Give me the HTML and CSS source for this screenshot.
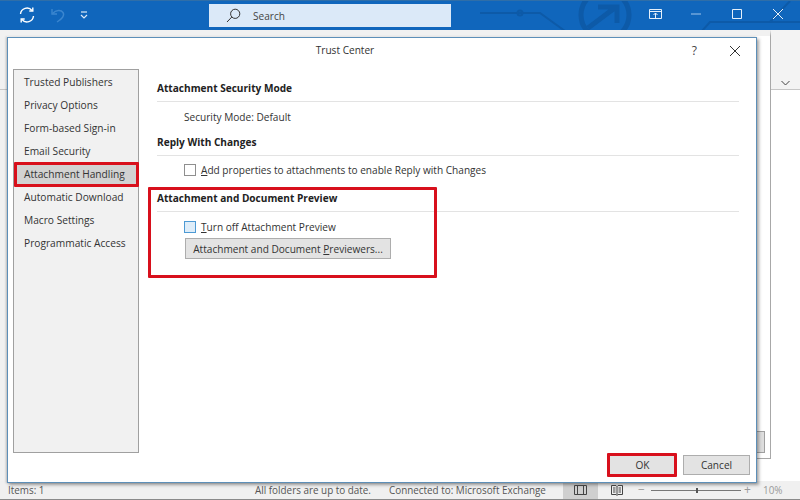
FILE: index.html
```html
<!DOCTYPE html>
<html lang="en">
<head>
<meta charset="utf-8">
<title>Trust Center</title>
<link rel="stylesheet" href="styles.css">
</head>
<body>
<div class="app">
  <header class="ribbon">
    <div class="qat">
      <svg class="ico" width="18" height="18" viewBox="0 0 18 18" fill="none" stroke="#fff" stroke-width="1.4"><path d="M2.500 8A6.500 6.500 0 0 1 14 4.500"/><path d="M15.500 10A6.500 6.500 0 0 1 4 13.500"/><path d="M14.800 1.500V5H11.300"/><path d="M3.200 16.500V13H6.700"/></svg>
      <svg class="ico" width="16" height="16" viewBox="0 0 16 16" fill="none" stroke="#3b86cf" stroke-width="1.400"><path d="M2 2V7H7"/><path d="M2.500 6.500C6 3 11 2.500 13 5.500S12 12 7 15"/></svg>
      <svg class="ico" width="8" height="8" viewBox="0 0 8 8" fill="none" stroke="#dbe9f7" stroke-width="1.200"><path d="M1 1H7"/><path d="M1 4L4 7L7 4"/></svg>
    </div>
    <div class="search">
      <svg width="15" height="15" viewBox="0 0 15 15" fill="none" stroke="#333"><circle cx="9.200" cy="5.800" r="4.600"/><path d="M5.800 9L1 14"/></svg>
      <span>Search</span>
    </div>
    <svg class="circuit" width="330" height="30" viewBox="0 0 330 30" fill="none" stroke="#0d5aa8" stroke-width="2"><path d="M10 12H70L95 30"/><circle cx="50" cy="12" r="2.500"/><circle cx="135" cy="14" r="24" stroke-width="5"/><path d="M118 27L146 6M128 6H147V22" stroke-width="5"/><path d="M232 30L240 21H330"/><path d="M300 21L320 0"/></svg>
    <div class="winctl">
      <svg class="ctl-first" width="13" height="10" viewBox="0 0 13 10" fill="none" stroke="#e6f0fa"><path d="M.5.5H12.500V9.500H.5Z"/><path d="M.5 2.500H12.500"/><path d="M6.500 9V4M4.500 6L6.500 4L8.500 6"/></svg>
      <svg width="10" height="10" viewBox="0 0 10 10" fill="none" stroke="#9fc4ea"><path d="M0 5H10"/></svg>
      <svg width="10" height="10" viewBox="0 0 10 10" fill="none" stroke="#e6f0fa"><path d="M.5.5H9.500V9.500H.5Z"/></svg>
      <svg width="10" height="10" viewBox="0 0 10 10" fill="none" stroke="#e6f0fa"><path d="M0 0L10 10M10 0L0 10"/></svg>
    </div>
  </header>

  <main class="workspace">
    <div class="left-rail"><div class="left-top"></div></div>
    <div class="reading">
      <div class="behind"></div>
    </div>
    <div class="right-rail">
      <div class="rail-top">
        <svg width="9" height="6" viewBox="0 0 9 6" fill="none" stroke="#444"><path d="M.5 1L4.500 5L8.500 1"/></svg>
      </div>
    </div>
  </main>

  <footer class="status">
    <span class="items">Items: 1</span>
    <span class="sync">All folders are up to date.</span>
    <span class="conn">Connected to: Microsoft Exchange</span>
    <div class="view active">
      <svg width="13" height="10" viewBox="0 0 13 10" fill="none" stroke="#444"><path d="M.5.5H12.500V9.500H.5ZM3.500.5V9.500M9.500.5V9.500"/></svg>
    </div>
    <div class="view">
      <svg width="12" height="11" viewBox="0 0 12 11" fill="none" stroke="#444"><path d="M.5.5H5L6 1.500L7 .5H11.500V9.500H7L6 10.500L5 9.500H.5ZM6 1.500V10M2 3H4.500M2 5H4.500M2 7H4.500M7.500 3H10M7.500 5H10M7.500 7H10"/></svg>
    </div>
    <div class="zoom">
      <span class="zoom-sign">−</span>
      <div class="zoom-track"><i class="zoom-thumb"></i></div>
      <span class="zoom-sign">+</span>
      <span class="zoom-val">10%</span>
    </div>
  </footer>

  <section class="dialog">
    <div class="dlg-title">
      <span class="dlg-name">Trust Center</span>
      <span class="dlg-help">?</span>
      <svg class="dlg-close" width="10" height="10" viewBox="0 0 10 10" fill="none" stroke="#333"><path d="M0 0L10 10M10 0L0 10"/></svg>
    </div>
    <div class="dlg-body">
      <nav class="side">
        <div class="side-item">Trusted Publishers</div>
        <div class="side-item">Privacy Options</div>
        <div class="side-item">Form-based Sign-in</div>
        <div class="side-item">Email Security</div>
        <div class="side-item selected">Attachment Handling</div>
        <div class="side-item">Automatic Download</div>
        <div class="side-item">Macro Settings</div>
        <div class="side-item">Programmatic Access</div>
      </nav>
      <div class="pane">
        <h2 class="sec-head">Attachment Security Mode</h2>
        <div class="sec-row">Security Mode: Default</div>
        <h2 class="sec-head second">Reply With Changes</h2>
        <label class="sec-row check"><i class="box"></i><span><u>A</u>dd properties to attachments to enable Reply with Changes</span></label>
        <h2 class="sec-head third">Attachment and Document Preview</h2>
        <label class="sec-row check"><i class="box focus"></i><span><u>T</u>urn off Attachment Preview</span></label>
        <button class="btn wide" type="button">Attachment and Document <u>P</u>reviewers...</button>
      </div>
    </div>
    <div class="dlg-foot">
      <button class="btn foot" type="button">OK</button>
      <button class="btn foot" type="button">Cancel</button>
    </div>
    <div class="mark mark-side"></div>
    <div class="mark mark-sec"></div>
    <div class="mark mark-ok"></div>
  </section>
</div>
</body>
</html>
```
FILE: styles.css
```css
* { box-sizing: border-box; }
html, body { margin: 0; padding: 0; }
body { width: 800px; height: 500px; overflow: hidden; background: #fff; font-family: "Open Sans", "Noto Sans", sans-serif; font-size: 10.1px; color: #333; }
.app { position: relative; width: 800px; height: 500px; display: flex; flex-direction: column; border-bottom: 1px solid #8a8a8a; }

.ribbon { position: relative; flex: 0 0 30px; display: flex; align-items: center; background: #1066bc; border-top: 1px solid #2f6ea8; padding-left: 18px; padding-bottom: 1px; }
.qat { display: flex; align-items: center; gap: 14px; width: 191px; }
.ico { display: block; }
.search { position: relative; z-index: 1; width: 242px; height: 23px; margin-top: 1px; background: #dbe9f8; display: flex; align-items: center; gap: 12px; padding-left: 17px; font-size: 10.1px; color: #444; }
.circuit { position: absolute; right: 0; top: 0; }
.winctl { position: absolute; right: 17px; top: 8px; display: flex; align-items: center; gap: 31px; }
.winctl svg { display: block; }
.winctl .ctl-first { margin-right: -2px; }

.workspace { flex: 1; display: flex; min-height: 0; background: #fff; }
.left-rail { width: 7px; background: #f1f1f1; }
.left-top { height: 60px; border-bottom: 1px solid #c6c6c6; }
.reading { position: relative; flex: 1; border-top: 6px solid #f1f1f1; border-right: 1px solid #a8a8a8; background: #fff; margin-bottom: 22px; border-bottom: 1px solid #a8a8a8; }
.behind { position: absolute; right: 5px; bottom: 5px; width: 12px; height: 22px; background: #dedede; border: 1px solid #a0a0a0; }
.right-rail { width: 29px; }
.rail-top { height: 60px; background: #f3f3f3; border-bottom: 1px solid #c6c6c6; display: flex; align-items: flex-end; justify-content: center; padding-bottom: 3px; }

.status { flex: 0 0 18px; display: flex; align-items: center; background: #f0f0f0; font-size: 9.9px; color: #555; padding-left: 8px; }
.items { width: 247px; }
.sync { width: 134px; }
.conn { width: 174px; }
.view { width: 35px; height: 18px; display: flex; align-items: center; justify-content: center; margin-right: 1px; }
.view.active { background: #cfcfcf; }
.zoom { display: flex; align-items: center; margin-left: 3px; color: #999; }
.zoom-sign { width: 9px; font-size: 12px; line-height: 12px; }
.zoom-track { position: relative; width: 90px; height: 1px; background: #777; margin: 0 3px 0 4px; }
.zoom-thumb { position: absolute; left: 45px; top: -2px; width: 2px; height: 5px; background: #555; }
.zoom-sign + .zoom-track + .zoom-sign { margin-right: 10px; }
.zoom-val { font-size: 9.9px; }

.dialog { position: absolute; left: 7px; top: 37px; width: 750px; height: 446px; background: #fff; border: 1px solid #5d8fb8; box-shadow: 2px 2px 3px rgba(60,60,60,.45), -1px 0 2px rgba(60,60,60,.3); display: flex; flex-direction: column; }
.dlg-title { position: relative; flex: 0 0 31px; display: flex; align-items: center; justify-content: center; padding-right: 74px; padding-bottom: 8px; }
.dlg-name { font-size: 10.1px; color: #333; }
.dlg-help { position: absolute; right: 59px; top: 4px; font-size: 12px; color: #444; }
.dlg-close { position: absolute; right: 16px; top: 8px; }
.dlg-body { flex: 1; display: flex; min-height: 0; padding-left: 5px; }
.side { width: 126px; height: 384px; background: #f1f1f1; border: 1px solid #a0a0a0; padding-top: 1px; font-size: 10.2px; }
.side-item { height: 23px; line-height: 23px; padding-left: 10px; white-space: nowrap; }
.side-item.selected { background: #d2d2d2; }
.pane { flex: 1; padding: 9px 17px 0 18px; }
.sec-head { margin: 0; height: 24px; line-height: 20px; font-size: 10.1px; font-weight: 700; color: #222; border-bottom: 1px solid #e3e3e3; }
.second { margin-top: 4px; }
.third { margin-top: 8px; }
.sec-row { display: flex; align-items: center; gap: 5px; height: 22px; margin-top: 4px; padding-left: 27px; }
.check { height: 20px; }
.third + .check { margin-top: 5px; }
.box { width: 12px; height: 12px; background: #fff; border: 1px solid #8f8f8f; }
.box.focus { background: #deedf9; border-color: #4d9ad4; }
.btn { font: inherit; color: #333; background: #e3e3e3; border: 1px solid #adadad; padding: 0; }
.wide { display: block; margin: 1px 0 0 28px; width: 206px; height: 21px; }
.dlg-foot { flex: 0 0 30px; display: flex; justify-content: flex-end; gap: 7px; padding-right: 6px; padding-bottom: 7px; align-items: flex-end; }
.foot { width: 67px; height: 20px; }
.mark { position: absolute; border: 3px solid #d8101c; border-radius: 1px; pointer-events: none; }
.mark-side { left: 6px; top: 124px; width: 125px; height: 25px; }
.mark-sec { left: 140px; top: 149px; width: 289px; height: 91px; }
.mark-ok { left: 599px; top: 415px; width: 70px; height: 24px; }
```
